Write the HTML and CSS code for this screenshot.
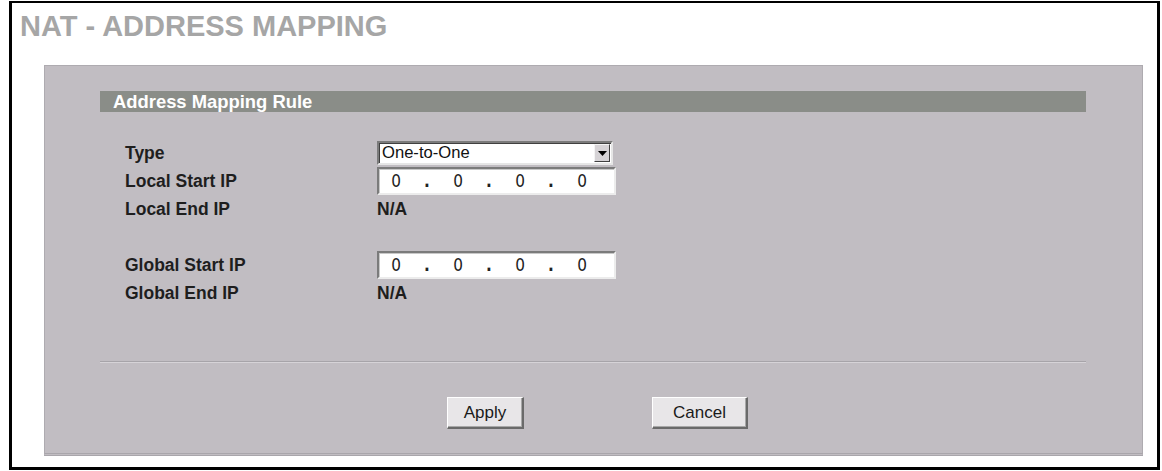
FILE: index.html
```html
<!DOCTYPE html>
<html>
<head>
<meta charset="utf-8">
<title>NAT - ADDRESS MAPPING</title>
<link rel="stylesheet" href="styles.css">
</head>
<body>
<div class="frame">
  <h1 class="title">NAT - ADDRESS MAPPING</h1>
  <div class="panel">
    <div class="bar">Address Mapping Rule</div>
    <div class="form">
      <div class="label">Type</div>
      <div class="value">
        <div class="select">
          <span class="select-text">One-to-One</span>
          <span class="select-btn"><svg width="9" height="5" viewBox="0 0 9 5"><path d="M0 0H9L4.5 5Z" fill="#000"/></svg></span>
        </div>
      </div>
      <div class="label">Local Start IP</div>
      <div class="value">
        <div class="ip"><span class="d">0</span><span class="dot">.</span><span class="d">0</span><span class="dot">.</span><span class="d">0</span><span class="dot">.</span><span class="d">0</span></div>
      </div>
      <div class="label">Local End IP</div>
      <div class="value na">N/A</div>
      <div class="spacer"></div>
      <div class="label">Global Start IP</div>
      <div class="value">
        <div class="ip"><span class="d">0</span><span class="dot">.</span><span class="d">0</span><span class="dot">.</span><span class="d">0</span><span class="dot">.</span><span class="d">0</span></div>
      </div>
      <div class="label">Global End IP</div>
      <div class="value na">N/A</div>
    </div>
    <div class="sep"></div>
    <div class="buttons">
      <button class="btn btn-apply">Apply</button>
      <button class="btn btn-cancel">Cancel</button>
    </div>
  </div>
</div>
</body>
</html>
```

FILE: styles.css
```css
html, body {
  margin: 0;
  padding: 0;
  background: #ffffff;
}

body {
  width: 1162px;
  height: 471px;
  overflow: hidden;
  font-family: "Liberation Sans", Arial, sans-serif;
}

.frame {
  box-sizing: border-box;
  margin: 1px 0 0 9px;
  width: 1151px;
  height: 469px;
  border-style: solid;
  border-color: #000;
  border-width: 2px 3px 3px 3px;
  padding: 0;
}

.title {
  margin: 0;
  padding: 7px 0 0 8px;
  height: 62px;
  box-sizing: border-box;
  font-size: 29px;
  line-height: 33px;
  font-weight: bold;
  color: #a6a6a6;
}

.panel {
  box-sizing: border-box;
  margin-left: 32px;
  width: 1099px;
  height: 391px;
  background: #c1bdc2;
  border: 1px solid #aeabb0;
  border-bottom: 3px double #a9a6ab;
  padding: 25px 56px 0 55px;
}

.bar {
  height: 21px;
  background: #8a8d88;
  color: #ffffff;
  font-weight: bold;
  font-size: 18.4px;
  line-height: 21px;
  padding-left: 13px;
}

.form {
  display: grid;
  grid-template-columns: 252px 1fr;
  grid-auto-rows: 28px;
  margin-top: 27px;
  padding-left: 25px;
}

.spacer {
  grid-column: 1 / span 2;
  height: 28px;
}

.label,
.na {
  font-weight: bold;
  font-size: 17.5px;
  color: #1e1e1e;
  display: flex;
  align-items: center;
  padding-top: 1px;
}

.value {
  display: flex;
  align-items: center;
}

.select {
  box-sizing: border-box;
  width: 236px;
  height: 24px;
  background: #fff;
  border-style: solid;
  border-width: 2px;
  border-color: #7b7b7b #e6e6e6 #e6e6e6 #7b7b7b;
  box-shadow: inset 1px 1px 0 #404040;
  display: flex;
  align-items: stretch;
}

.select-text {
  flex: 1;
  font-size: 16.6px;
  line-height: 20px;
  padding-left: 3px;
  color: #111;
}

.select-btn {
  width: 16px;
  box-sizing: border-box;
  background: #d6d3d6;
  border-style: solid;
  border-width: 1px;
  border-color: #f4f4f4 #404040 #404040 #f4f4f4;
  display: flex;
  align-items: center;
  justify-content: center;
  margin: 1px 1px 1px 0;
}

.ip {
  box-sizing: border-box;
  width: 239px;
  height: 28px;
  background: #fff;
  border-style: solid;
  border-width: 2px;
  border-color: #7b7b7b #ececec #ececec #7b7b7b;
  box-shadow: inset 1px 1px 0 #c8c8c8;
  display: flex;
  align-items: center;
  gap: 19px;
  padding-left: 11px;
  font-family: "Liberation Sans Narrow", "DejaVu Sans Condensed", "Liberation Sans", sans-serif;
  font-size: 17px;
  color: #222;
}

.ip .d,
.ip .dot {
  width: 12px;
  text-align: center;
}

.ip .dot {
  font-weight: bold;
}

.sep {
  margin-top: 54px;
  height: 1px;
  background: #a7a4a9;
  border-bottom: 1px solid #d6d3d7;
}

.buttons {
  display: flex;
  margin-top: 34px;
  padding-left: 347px;
}

.btn {
  box-sizing: border-box;
  height: 32px;
  background: #e8e6e8;
  font-family: "Liberation Sans", Arial, sans-serif;
  font-size: 17px;
  color: #1a1a1a;
  border-style: solid;
  border-width: 1px 2px 2px 1px;
  border-color: #ffffff #6a6a6a #6a6a6a #ffffff;
  box-shadow: inset -1px -1px 0 #a8a8a8;
  padding: 0;
}

.btn-apply {
  width: 77px;
}

.btn-cancel {
  width: 96px;
  margin-left: 128px;
}
```
